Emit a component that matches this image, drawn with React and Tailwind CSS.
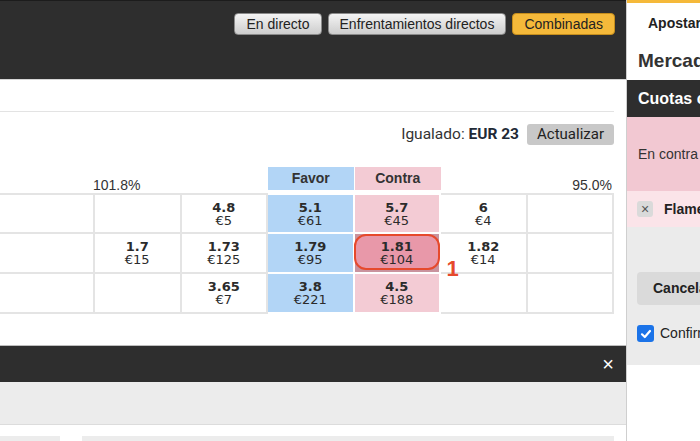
const rows = [
  [null, null, ['4.8', '€5'], ['5.1', '€61'], ['5.7', '€45'], ['6', '€4'], null],
  [null, ['1.7', '€15'], ['1.73', '€125'], ['1.79', '€95'], ['1.81', '€104'], ['1.82', '€14'], null],
  [null, null, ['3.65', '€7'], ['3.8', '€221'], ['4.5', '€188'], null, null],
]

function Cell({ data, col, row, selected }) {
  const bg =
    col === 3 ? 'bg-[#b2d5f6] border-white' : col === 4 ? 'bg-[#f3cbd4] border-white' : 'bg-white border-[#e4e4e4]'
  return (
    <div
      className={`relative border-r-2 border-b-2 ${row === 0 ? 'border-t-2 h-[41px]' : 'h-[40px]'} ${bg} ${
        selected ? '!bg-[#c9939e] z-10' : ''
      } flex flex-col items-center justify-center`}
    >
      {selected && (
        <div className="absolute left-[-1px] top-0 right-[-1px] bottom-[2px] rounded-[12px] border-2 border-[#e6492c] bg-[#e898a9]" />
      )}
      {data && (
        <div className="relative flex flex-col items-center font-['DejaVu_Sans',Verdana,sans-serif] text-[13px] leading-[13px] text-[#2b2b2b]">
          <span className="font-bold">{data[0]}</span>
          <span>{data[1]}</span>
        </div>
      )}
      {selected && (
        <span className="absolute left-[92px] top-[24px] text-[22px] font-bold leading-none text-[#e6492c]">1</span>
      )}
    </div>
  )
}

export default function App() {
  return (
    <div className="w-[700px] h-[441px] overflow-hidden flex bg-white font-['Liberation_Sans',Arial,sans-serif] text-[#222]">
      {/* main column */}
      <div className="w-[626px] shrink-0 overflow-hidden">
        <div className="h-[79px] bg-[#2e2e2e] border-t border-[#1c1c1c]">
          <div className="flex justify-end gap-[6px] pt-[12px] pr-[11px]">
            <button className="h-[22px] px-[11px] rounded-[4px] border border-[#8a8a8a] bg-gradient-to-b from-[#f4f4f4] to-[#cdcdcd] text-[14px] leading-none text-[#222]">
              En directo
            </button>
            <button className="h-[22px] px-[11px] rounded-[4px] border border-[#8a8a8a] bg-gradient-to-b from-[#f4f4f4] to-[#cdcdcd] text-[14px] leading-none text-[#222]">
              Enfrentamientos directos
            </button>
            <button className="h-[22px] px-[11px] rounded-[4px] border border-[#c58d1c] bg-[#f5b93a] text-[14px] leading-none text-[#222]">
              Combinadas
            </button>
          </div>
        </div>

        <div className="border-t border-[#d6d6d6] pr-[12px]">
          <div className="mt-[31px] h-px bg-[#e3e3e3]" />
          <div className="mt-[12px] h-[21px] flex justify-end items-center gap-[8px] font-['Roboto',sans-serif] text-[15.5px] text-[#333]">
            <span>
              Igualado: <b className="text-[#1f2a36]">EUR 23</b>
            </span>
            <button className="w-[87px] h-[21px] rounded-[3px] bg-[#c8c8c8] text-[15px] leading-none text-[#222]">
              Actualizar
            </button>
          </div>

          <div className="mt-[22px] grid grid-cols-[95px_repeat(6,1fr)] h-[23px] text-[14px]">
            <div />
            <div className="self-end -ml-[2px] -mb-[3px] leading-[16px] text-[#333]">101.8%</div>
            <div />
            <div className="bg-[#b2d5f6] mr-[1px] flex items-center justify-center font-bold text-[#333]">Favor</div>
            <div className="bg-[#f3cbd4] flex items-center justify-center font-bold text-[#333]">Contra</div>
            <div />
            <div className="self-end -mb-[3px] pr-[2px] text-right leading-[16px] text-[#333]">95.0%</div>
          </div>

          <div className="mt-[3px] grid grid-cols-[95px_repeat(6,1fr)]">
            {rows.map((r, ri) =>
              r.map((c, ci) => <Cell key={`${ri}-${ci}`} data={c} col={ci} row={ri} selected={ri === 1 && ci === 4} />)
            )}
          </div>
        </div>

        <div className="mt-[31px] h-[37px] bg-[#2e2e2e] border-t border-[#bdbdbd] flex items-center justify-end pr-[12px]">
          <span className="text-white text-[20px] leading-none">×</span>
        </div>
        <div className="h-[43px] bg-[#ececec] border-b border-[#dcdcdc]" />
        <div className="mt-[11px] flex gap-[22px] pr-[12px]">
          <div className="w-[60px] h-[20px] bg-[#ececec]" />
          <div className="flex-1 h-[20px] bg-[#ececec]" />
        </div>
      </div>

      {/* bet slip */}
      <div className="flex-1 min-w-0 border-l border-[#cfcfcf] whitespace-nowrap overflow-hidden">
        <div className="h-[80px] bg-white border-t-[3px] border-[#f5b93a]">
          <div className="pl-[21px] pt-[10px] text-[14px] font-bold text-[#222]">Apostar ahora</div>
          <div className="pl-[11px] pt-[17px] text-[19px] font-bold leading-none text-[#333]">Mercados</div>
        </div>
        <div className="h-[37px] bg-[#2e2e2e] flex items-center pl-[11px] text-[16px] font-bold text-white">
          Cuotas contra
        </div>
        <div className="h-[74px] bg-[#f2c8d2] flex items-center pl-[11px] text-[14px] text-[#333]">En contra (Lay)</div>
        <div className="h-[36px] bg-[#fbe4e9] flex items-center pl-[10px] gap-[11px]">
          <span className="shrink-0 w-[16px] h-[16px] rounded-[3px] bg-[#dadada] flex items-center justify-center text-[14px] leading-none text-[#555]">
            ×
          </span>
          <span className="text-[14px] font-bold text-[#222]">Flamengo</span>
        </div>
        <div className="h-[138px] bg-[#ebebeb] pl-[10px]">
          <div className="pt-[45px]">
            <div className="h-[33px] w-[120px] rounded-[4px] bg-[#dadada] flex items-center pl-[16px] text-[14px] font-bold text-[#222]">
              Cancelar
            </div>
          </div>
          <div className="mt-[18px] flex items-center gap-[6px]">
            <span className="shrink-0 w-[17px] h-[17px] rounded-[3px] bg-[#1b73e8] flex items-center justify-center">
              <svg width="12" height="12" viewBox="0 0 12 12">
                <path d="M2 6.3 L4.8 9 L10 3" fill="none" stroke="white" strokeWidth="2.2" strokeLinecap="round" strokeLinejoin="round" />
              </svg>
            </span>
            <span className="text-[14px] text-[#222]">Confirmar apuestas</span>
          </div>
        </div>
      </div>
    </div>
  )
}
